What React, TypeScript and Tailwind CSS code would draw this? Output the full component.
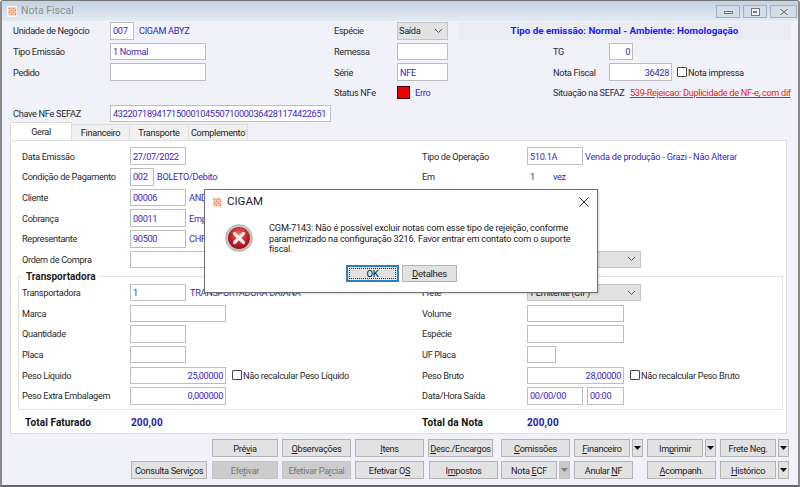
import React from "react";

const Lbl = ({ children, className = "" }: { children: React.ReactNode; className?: string }) => (
  <span className={"whitespace-nowrap text-[#2a2a2a] " + className}>{children}</span>
);
const Val = ({ children, className = "" }: { children: React.ReactNode; className?: string }) => (
  <span className={"whitespace-nowrap text-[#3a25c0] " + className}>{children}</span>
);
const Inp = ({ w, children, right, className = "" }: { w: string; children?: React.ReactNode; right?: boolean; className?: string }) => (
  <div className={`${w} h-full shrink-0 border border-[#bdbdbd] bg-white flex items-center px-[2px] whitespace-nowrap text-[#3a25c0] ${right ? "justify-end" : ""} ${className}`}>
    {children}
  </div>
);
const Chevron = () => (
  <svg width="9" height="6" viewBox="0 0 9 6" className="shrink-0">
    <path d="M1 1l3.5 3.5L8 1" fill="none" stroke="#555" strokeWidth="1" />
  </svg>
);
const Sel = ({ w, children }: { w: string; children?: React.ReactNode }) => (
  <div className={`${w} h-full shrink-0 border border-[#c4c4c4] bg-[#e2e2e2] flex items-center justify-between pl-[1px] pr-[4px] text-[#222] whitespace-nowrap`}>
    <span>{children}</span>
    <Chevron />
  </div>
);
const Check = () => <div className="w-[10px] h-[10px] shrink-0 border border-[#444] bg-white rounded-[1px] mr-[1px]" />;
const Logo = () => (
  <svg width="10" height="11" viewBox="0 0 10 11" className="shrink-0">
    <rect width="10" height="11" fill="#fdf6f0" />
    {[1.5, 3.5, 5.5, 7.5].map((x) =>
      [1.5, 3.5, 5.5, 7.5].map((y) => (
        <rect key={x + "-" + y} x={x} y={y} width="1.7" height="1.7" fill={(x + y) % 4 === 1 ? "#f6b48c" : "#ec7a42"} />
      ))
    )}
  </svg>
);
const Row = ({ children }: { children: React.ReactNode }) => (
  <div className="grid grid-cols-[108px_292px_105px_minmax(0,1fr)] h-[17.5px] mb-[3.17px] items-center">{children}</div>
);
const Cell = ({ children }: { children?: React.ReactNode }) => <div className="flex items-center h-full">{children}</div>;

const Btn = ({ w, children, disabled, className = "" }: { w: string; children: React.ReactNode; disabled?: boolean; className?: string }) => (
  <div
    className={`${w} h-full shrink-0 border flex items-center justify-center whitespace-nowrap ${
      disabled ? "bg-[#cccccc] border-[#c4c4c4] text-[#777]" : "bg-[#e2e2e2] border-[#b4b4b4] text-[#222]"
    } ${className}`}
  >
    <span>{children}</span>
  </div>
);
const Arrow = ({ disabled, w = "w-[11px]" }: { disabled?: boolean; w?: string }) => (
  <div className={`${w} h-full shrink-0 border flex items-center justify-center ${disabled ? "bg-[#c8c8c8] border-[#c4c4c4]" : "bg-[#e2e2e2] border-[#b4b4b4]"}`}>
    <svg width="7" height="4" viewBox="0 0 7 4">
      <path d="M0 0h7L3.5 4z" fill={disabled ? "#808080" : "#111"} />
    </svg>
  </div>
);

export default function App() {
  return (
    <div className="relative w-[800px] h-[487px] overflow-hidden bg-[#f0f1f9] text-[9.2px] tracking-[-0.32px] leading-none font-['Roboto',sans-serif] border-x-2 border-t border-b-2 border-x-[#8a8a8a] border-t-[#777] border-b-[#666] rounded-t-[3px] flex flex-col">
      {/* title bar */}
      <div className="h-[20px] shrink-0 flex items-center bg-gradient-to-b from-[#c3d2e2] to-[#e3ebf4] pl-[5px] pr-[1px]">
        <Logo />
        <span className="ml-[4px] text-[#8d8d8d] text-[10.5px] tracking-normal">Nota Fiscal</span>
        <div className="ml-auto flex h-[13px] gap-[3px] mt-[1px]">
          <div className="w-[24px] h-full border border-[#a4afbb] bg-[#d3dde7] flex items-end justify-center pb-[3px]">
            <div className="w-[9px] h-[3px] border border-[#777] bg-[#eee]" />
          </div>
          <div className="w-[24px] h-full border border-[#a4afbb] bg-[#d3dde7] flex items-center justify-center">
            <div className="w-[9px] h-[8px] border border-[#777] bg-[#eef2f6] flex items-center justify-center"><div className="w-[4px] h-[2px] bg-[#777]" /></div>
          </div>
          <div className="w-[27px] h-full border border-[#a4afbb] bg-[#d3dde7] flex items-center justify-center">
            <svg width="10" height="8" viewBox="0 0 10 8"><path d="M1.5 1l7 6M8.5 1l-7 6" stroke="#f4f6f8" strokeWidth="3" /><path d="M1.5 1l7 6M8.5 1l-7 6" stroke="#808080" strokeWidth="1.4" /></svg>
          </div>
        </div>
      </div>

      {/* header form */}
      <div className="grid grid-cols-[97px_224px_63px_61px_95px_56px_minmax(0,1fr)] auto-rows-[17.7px] gap-y-[3px] pl-[11px] pt-[1px] shrink-0">
        <Lbl className="self-center">Unidade de Negócio</Lbl>
        <div className="flex items-center h-full"><Inp w="w-[24px]">007</Inp><Val className="ml-[5px]">CIGAM ABYZ</Val></div>
        <Lbl className="self-center">Espécie</Lbl>
        <Sel w="w-[51px]">Saída</Sel>
        <div className="col-span-3 h-full mr-[7px] bg-[#eaebf3] flex items-center justify-center font-bold text-[#1a1aff] text-[9.8px] tracking-normal">Tipo de emissão: Normal - Ambiente: Homologação</div>

        <Lbl className="self-center">Tipo Emissão</Lbl>
        <Inp w="w-[96px]">1 Normal</Inp>
        <Lbl className="self-center">Remessa</Lbl>
        <Inp w="w-[51px]" />
        <div />
        <Lbl className="self-center">TG</Lbl>
        <Inp w="w-[24px]" right>0</Inp>

        <Lbl className="self-center">Pedido</Lbl>
        <Inp w="w-[96px]" />
        <Lbl className="self-center">Série</Lbl>
        <Inp w="w-[51px]">NFE</Inp>
        <div />
        <Lbl className="self-center">Nota Fiscal</Lbl>
        <div className="flex items-center h-full">
          <Inp w="w-[63px]" right className="bg-[#e6f0fb] border-[#a8a8a8]">36428</Inp>
          <div className="ml-[5px] flex items-center"><Check /><Lbl>Nota impressa</Lbl></div>
        </div>

        <div />
        <div />
        <Lbl className="self-center">Status NFe</Lbl>
        <div className="flex items-center h-full">
          <div className="w-[13px] h-[13px] bg-[#f00000] border border-[#400] shrink-0" />
          <Val className="ml-[5px]">Erro</Val>
        </div>
        <div />
        <Lbl className="self-center">Situação na SEFAZ</Lbl>
        <div className="flex items-center h-full pl-[21px]">
          <span className="whitespace-nowrap text-[#f01818] underline">539-Rejeicao: Duplicidade de NF-e, com dif</span>
        </div>

        <Lbl className="self-center">Chave NFe SEFAZ</Lbl>
        <div className="col-span-6 h-full"><Inp w="w-[221px]">43220718941715000104550710000364281174422651</Inp></div>
      </div>

      {/* tabs */}
      <div className="flex pl-[8px] h-[17px] mt-[1px] shrink-0 items-end relative z-10">
        <div className="w-[62px] h-[18px] bg-white border-x border-t border-[#dcdcdc] flex items-center justify-center text-[#222]">Geral</div>
        <div className="w-[58px] h-[16px] bg-[#f0f0f0] border-t border-r border-[#dcdcdc] flex items-center justify-center text-[#222]">Financeiro</div>
        <div className="w-[59px] h-[16px] bg-[#f0f0f0] border-t border-r border-[#dcdcdc] flex items-center justify-center text-[#222]">Transporte</div>
        <div className="w-[59px] h-[16px] bg-[#f0f0f0] border-t border-r border-[#dcdcdc] flex items-center justify-center text-[#222]">Complemento</div>
      </div>

      {/* panel */}
      <div className="ml-[8px] mr-[11px] h-[294px] shrink-0 bg-white border border-[#dcdcdc] pl-[11px] pt-[6px] flex flex-col">
        <Row>
          <Lbl>Data Emissão</Lbl>
          <Cell><Inp w="w-[56px]">27/07/2022</Inp></Cell>
          <Lbl>Tipo de Operação</Lbl>
          <Cell><Inp w="w-[56px]">510.1A</Inp><Val className="ml-[2px] tracking-[-0.22px]">Venda de produção - Grazi - Não Alterar</Val></Cell>
        </Row>
        <Row>
          <Lbl>Condição de Pagamento</Lbl>
          <Cell><Inp w="w-[24px]">002</Inp><Val className="ml-[3px]">BOLETO/Debito</Val></Cell>
          <Lbl>Em</Lbl>
          <Cell><Val className="ml-[3px] w-[23px]">1</Val><Val>vez</Val></Cell>
        </Row>
        <Row>
          <Lbl>Cliente</Lbl>
          <Cell><Inp w="w-[56px]">00006</Inp><Val className="ml-[3px]">ANDRE</Val></Cell>
          <span /><span />
        </Row>
        <Row>
          <Lbl>Cobrança</Lbl>
          <Cell><Inp w="w-[56px]">00011</Inp><Val className="ml-[3px]">Empresa</Val></Cell>
          <span /><span />
        </Row>
        <Row>
          <Lbl>Representante</Lbl>
          <Cell><Inp w="w-[56px]">90500</Inp><Val className="ml-[3px]">CHRIS</Val></Cell>
          <span /><span />
        </Row>
        <Row>
          <Lbl>Ordem de Compra</Lbl>
          <Cell><Inp w="w-[96px]" /></Cell>
          <span />
          <Cell><Sel w="w-[114px]" /></Cell>
        </Row>

        {/* group */}
        <div className="relative -ml-[4px] mr-[3px] mt-[4.5px] h-[134px] shrink-0 border border-[#e2e2e2] pl-[3px] pt-[7px]">
          <span className="absolute left-[4px] -top-[5px] bg-white px-[3px] font-bold text-[10px] tracking-normal text-[#222]">Transportadora</span>
          <Row>
            <Lbl>Transportadora</Lbl>
            <Cell><Inp w="w-[56px]">1</Inp><Val className="ml-[4px]">TRANSPORTADORA DAIANA</Val></Cell>
            <Lbl>Frete</Lbl>
            <Cell><Sel w="w-[114px]">1 Emitente (CIF)</Sel></Cell>
          </Row>
          <Row>
            <Lbl>Marca</Lbl>
            <Cell><Inp w="w-[96px]" /></Cell>
            <Lbl>Volume</Lbl>
            <Cell><Inp w="w-[97px]" /></Cell>
          </Row>
          <Row>
            <Lbl>Quantidade</Lbl>
            <Cell><Inp w="w-[56px]" /></Cell>
            <Lbl>Espécie</Lbl>
            <Cell><Inp w="w-[97px]" /></Cell>
          </Row>
          <Row>
            <Lbl>Placa</Lbl>
            <Cell><Inp w="w-[56px]" /></Cell>
            <Lbl>UF Placa</Lbl>
            <Cell><Inp w="w-[29px]" /></Cell>
          </Row>
          <Row>
            <Lbl>Peso Líquido</Lbl>
            <Cell><Inp w="w-[96px]" right>25,00000</Inp><div className="ml-[6px] flex items-center"><Check /><Lbl>Não recalcular Peso Líquido</Lbl></div></Cell>
            <Lbl>Peso Bruto</Lbl>
            <Cell><Inp w="w-[97px]" right>28,00000</Inp><div className="ml-[6px] flex items-center"><Check /><Lbl>Não recalcular Peso Bruto</Lbl></div></Cell>
          </Row>
          <Row>
            <Lbl>Peso Extra Embalagem</Lbl>
            <Cell><Inp w="w-[96px]" right>0,000000</Inp></Cell>
            <Lbl>Data/Hora Saída</Lbl>
            <Cell><Inp w="w-[56px]">00/00/00</Inp><Inp w="w-[37px]" className="ml-[4px]">00:00</Inp></Cell>
          </Row>
        </div>

        <div className="grid grid-cols-[108px_292px_105px_minmax(0,1fr)] mt-[8px] items-center font-bold text-[10px] tracking-[0.1px] pl-[3px]">
          <Lbl className="!text-[#111]">Total Faturado</Lbl>
          <Val className="!text-[#1c1ca8] -ml-[2px]">200,00</Val>
          <Lbl className="-ml-[3px] !text-[#111]">Total da Nota</Lbl>
          <Val className="-ml-[3px] !text-[#1c1ca8]">200,00</Val>
        </div>
      </div>

      {/* buttons */}
      <div className="flex flex-col gap-[4.5px] mt-[5px] shrink-0">
        <div className="flex h-[17.5px] pl-[210px]">
          <Btn w="w-[66px]">Pré<u>v</u>ia</Btn>
          <Btn w="w-[69px]" className="ml-[4px]"><u>O</u>bservações</Btn>
          <Btn w="w-[69px]" className="ml-[4px]"><u>I</u>tens</Btn>
          <Btn w="w-[65px]" className="ml-[4px]"><u>D</u>esc./Encargos</Btn>
          <Btn w="w-[69px]" className="ml-[8px]"><u>C</u>omissões</Btn>
          <Btn w="w-[56px]" className="ml-[4px]"><u>F</u>inanceiro</Btn>
          <div className="ml-[2px] h-full"><Arrow /></div>
          <Btn w="w-[56px]" className="ml-[4px]">Im<u>p</u>rimir</Btn>
          <div className="ml-[2px] h-full"><Arrow /></div>
          <Btn w="w-[56px]" className="ml-[4px]">Frete Neg.</Btn>
          <div className="ml-[2px] h-full"><Arrow /></div>
        </div>
        <div className="flex h-[18px] pl-[129px]">
          <Btn w="w-[76px]">Consulta Servi<u>ç</u>os</Btn>
          <Btn w="w-[66px]" className="ml-[5px]" disabled>Efe<u>t</u>ivar</Btn>
          <Btn w="w-[69px]" className="ml-[4px]" disabled>Efetivar Pa<u>r</u>cial</Btn>
          <Btn w="w-[69px]" className="ml-[4px]">Efetivar O<u>S</u></Btn>
          <Btn w="w-[69px]" className="ml-[5px]">I<u>m</u>postos</Btn>
          <Btn w="w-[56px]" className="ml-[3px]">Nota <u>E</u>CF</Btn>
          <div className="ml-[2px] h-full"><Arrow disabled /></div>
          <Btn w="w-[59px]" className="ml-[4px]">Anular <u>N</u>F</Btn>
          <Btn w="w-[69px]" className="ml-[14px]"><u>A</u>companh.</Btn>
          <Btn w="w-[56px]" className="ml-[4px]"><u>H</u>istórico</Btn>
          <div className="ml-[2px] h-full"><Arrow /></div>
        </div>
      </div>

      {/* dialog */}
      <div className="absolute left-[202px] top-[188px] w-[394px] h-[104px] bg-white border border-[#707070] flex flex-col shadow-[1px_1px_2px_rgba(0,0,0,0.15)]">
        <div className="flex items-center h-[23px] pl-[7px] pr-[8px] pt-[1px] shrink-0">
          <Logo />
          <span className="ml-[5px] text-[11.5px] tracking-normal text-[#222]">CIGAM</span>
          <svg width="10" height="10" viewBox="0 0 10 10" className="ml-auto">
            <path d="M.5.5l9 9M9.5.5l-9 9" stroke="#222" strokeWidth="1" />
          </svg>
        </div>
        <div className="flex pl-[20px] pt-[10px] shrink-0">
          <svg width="28" height="28" viewBox="0 0 28 28" className="shrink-0 mt-[1px]">
            <defs>
              <radialGradient id="er" cx="50%" cy="35%" r="70%">
                <stop offset="0%" stopColor="#e8726e" />
                <stop offset="55%" stopColor="#c42026" />
                <stop offset="100%" stopColor="#8a0e14" />
              </radialGradient>
            </defs>
            <circle cx="14" cy="14" r="13.3" fill="#c9c9c9" stroke="#999" strokeWidth=".7" />
            <circle cx="14" cy="14" r="11" fill="url(#er)" />
            <path d="M9.5 9.5l9 9M18.5 9.5l-9 9" stroke="#f6eeee" strokeWidth="3.2" strokeLinecap="round" />
          </svg>
          <p className="ml-[16px] w-[310px] leading-[10.7px] tracking-[-0.18px] text-[#222]">
            CGM-7143: Não é possível excluir notas com esse tipo de rejeição, conforme<br />
            parametrizado na configuração 3216. Favor entrar em contato com o suporte<br />
            fiscal.
          </p>
        </div>
        <div className="flex h-[17px] gap-[3px] pl-[141px] mt-[10px] shrink-0">
          <div className="w-[53px] h-full border-2 border-[#2f7fc0] bg-[#e2e2e2] flex items-center justify-center text-[#111] text-[9.6px]">
            <span className="border border-dotted border-[#333] w-[47px] h-[11px] flex items-center justify-center">OK</span>
          </div>
          <div className="w-[55px] h-full border border-[#b4b4b4] bg-[#e2e2e2] flex items-center justify-center text-[#222] text-[9.6px]"><span><u>D</u>etalhes</span></div>
        </div>
      </div>
    </div>
  );
}
